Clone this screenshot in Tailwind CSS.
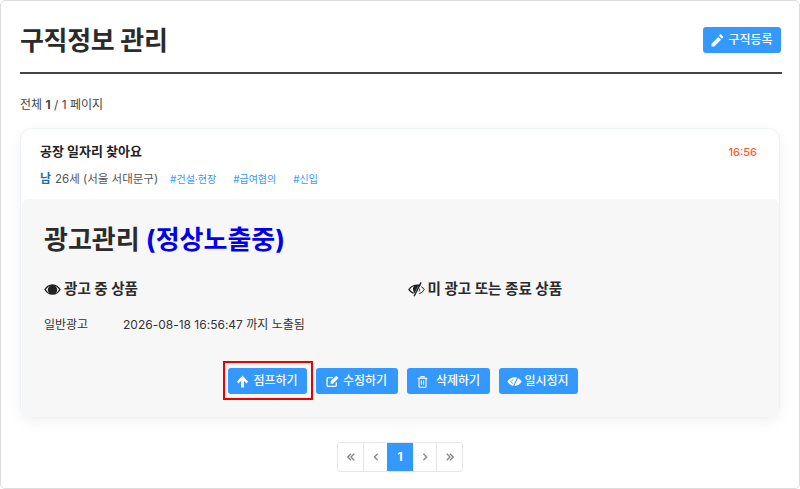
<!DOCTYPE html>
<html lang="ko">
<head>
    <meta charset="UTF-8">
    <title>구직정보 관리</title>
    <script src="https://cdn.jsdelivr.net/npm/@tailwindcss/browser@4"></script>
</head>
<body class="bg-white font-['Inter','Noto_Sans_CJK_KR',sans-serif] text-[#333]">
    <div class="h-[489px] w-[800px] overflow-hidden rounded-[5px] border border-[#ddd] pl-[19px] pr-[17px]">
        <!-- header -->
        <div class="flex h-[73px] items-center justify-between border-b-2 border-[#444] pt-[7px]">
            <h1 class="text-[26px] font-bold tracking-[-0.3px] text-[#2b2b2b]">구직정보 관리</h1>
            <button class="mr-px flex h-[26px] w-[78px] items-center justify-center gap-1 rounded-[3px] bg-[#3399ff] text-xs font-medium text-white">
                <svg class="h-[13px] w-[13px]" viewBox="0 0 24 24" fill="#fff"><path d="M1 18v5h5L18.500 10.500l-5-5zM21.800 7.200c1-1 1-2 0-3l-2.900-2.900c-1-1-2-1-3 0l-1.300 1.300 5 5.900z"/></svg>
                구직등록
            </button>
        </div>

        <p class="mt-[23px] text-xs leading-4 text-[#444]">전체 <b>1</b> / 1 페이지</p>

        <!-- card -->
        <div class="mt-[15px] h-[290px] w-[760px] overflow-hidden rounded-xl border border-[#edf2fa] bg-white shadow-[0_4px_14px_rgba(0,0,0,0.06)]">
            <div class="flex h-[70px] justify-between pl-[19px] pr-[22px]">
                <div>
                    <h2 class="mt-3 text-[13px] leading-5 font-bold text-[#222]">공장 일자리 찾아요</h2>
                    <div class="mt-2 flex items-center text-xs leading-5">
                        <span class="font-bold text-[#1a6fa8]">남</span>
                        <span class="ml-1 text-[11.5px] text-[#555]">26세 (서울 서대문구)</span>
                        <span class="ml-3 text-[10px] text-[#3399ff]">#건설·현장</span>
                        <span class="ml-[17px] text-[10px] text-[#3399ff]">#급여협의</span>
                        <span class="ml-[17px] text-[10px] text-[#3399ff]">#신입</span>
                    </div>
                </div>
                <span class="mt-[13px] text-[11px] leading-5 font-medium text-[#ff5a1f]">16:56</span>
            </div>

            <div class="ml-px h-[220px] rounded-t-md bg-[#f7f7f8] px-[22px]">
                <h3 class="pt-[22px] text-[26px] leading-[38px] font-bold text-[#2b2b2b]">광고관리 <span class="text-[#0000ee]">(정상노출중)</span></h3>
                <div class="mt-5 grid grid-cols-2 text-[14.6px] leading-5 font-bold text-[#2b2b2b]">
                    <div class="flex items-center gap-[3px]">
                        <svg class="h-[17px] w-[17px]" viewBox="0 0 24 24" fill="#222"><path fill-rule="evenodd" d="M12 4.500C6.800 4.500 2.700 7.800.3 12c2.400 4.200 6.500 7.500 11.700 7.500S21.300 16.200 23.700 12C21.300 7.800 17.200 4.500 12 4.500zM2.600 12C4.200 9.600 6.200 7.800 8.400 6.900A6.800 6.800 0 0 0 5.300 12.500c0 1.800.8 3.500 2.300 4.600C5.600 16 3.900 14.200 2.600 12zm14 5.100a6.800 6.800 0 0 0 2.100-4.600c0-2.300-1.200-4.300-3.100-5.600 2.300.9 4.400 2.700 5.800 5.100-1.300 2.200-3 4-4.800 5.100z"/><circle cx="12" cy="12" r="5.300"/></svg>
                        광고 중 상품
                    </div>
                    <div class="flex items-center gap-[3px] pl-[7px]">
                        <svg class="h-[17px] w-[17px]" viewBox="0 0 24 24"><path fill="#222" fill-rule="evenodd" d="M12 5C7 5 2.800 8 .3 12c1.700 2.800 4.100 5 7 6.200l1-1.900C5.800 15.300 3.900 13.800 2.600 12 4.200 9.700 6.400 8 9 7.200 7.800 8.200 7 9.800 7 11.500c0 1 .3 2 .8 2.800l1.200 3.500 5-10.200c.9-.1 1.900-.1 2.800.1l1-2.100C16.800 5.200 14.400 5 12 5z"/><path fill="#222" d="M19.300 2.500 9.500 22l-1.800-1L17.500 1.500zM18.800 7.500c2 1.100 3.700 2.700 4.900 4.500-1.800 3.200-4.800 5.600-8.400 6.700l.8-1.700c2.600-.9 4.900-2.700 6.200-5-1-1.300-2.300-2.500-3.600-3.200z"/><path fill="#222" d="M16.900 10.500c.3 2-.4 4-1.900 5.300l.4-2.200c.3-.9.4-1.800.3-2.700z"/></svg>
                        미 광고 또는 종료 상품
                    </div>
                </div>
                <div class="mt-4 flex text-xs leading-5 text-[#333]">
                    <span class="w-[79px]">일반광고</span>
                    <span>2026-08-18 16:56:47 까지 노출됨</span>
                </div>
                <div class="mt-[33px] flex justify-center gap-[9px] pl-1">
                    <div class="relative">
                        <button class="flex h-[26px] w-[79px] items-center justify-center gap-1 rounded-[3px] bg-[#3399ff] text-xs font-medium text-white">
                            <svg class="h-[13px] w-[13px]" viewBox="0 0 24 24" fill="#fff"><path d="M12 1 1.500 12.500l3.300 3.300 4.700-5V23h5V10.800l4.700 5 3.300-3.300z"/></svg>
                            점프하기
                        </button>
                        <div class="absolute -left-[5px] -top-[7px] h-[39px] w-[90px] border-2 border-[#ee0000]"></div>
                    </div>
                    <button class="flex h-[26px] w-[82px] items-center justify-center gap-1 rounded-[3px] bg-[#3399ff] text-xs font-medium text-white">
                        <svg class="h-[13px] w-[13px]" viewBox="0 0 24 24" fill="none" stroke="#fff" stroke-width="2.400"><path d="M19 14v5a2 2 0 0 1-2 2H4a2 2 0 0 1-2-2V7a2 2 0 0 1 2-2h9"/><path d="M8.500 16v-4.500L19 1.500l4 4-10 10.500z" fill="#fff" stroke="none"/></svg>
                        수정하기
                    </button>
                    <button class="flex h-[26px] w-[83px] items-center justify-center gap-[7px] rounded-[3px] bg-[#3399ff] text-xs font-medium text-white">
                        <svg class="h-[13px] w-[13px]" viewBox="0 0 24 24" fill="none" stroke="#fff" stroke-width="2"><path d="M3 6h18M9 6V3h6v3M5.500 6v15a1.500 1.500 0 0 0 1.500 1.500h10a1.500 1.500 0 0 0 1.500-1.500V6M10 10v8M14 10v8"/></svg>
                        삭제하기
                    </button>
                    <button class="flex h-[26px] w-[79px] items-center justify-center gap-[2px] rounded-[3px] bg-[#3399ff] text-xs font-medium text-white">
                        <svg class="h-[15px] w-[15px]" viewBox="0 0 24 24" fill="#fff"><path d="M12 5C7 5 3 8 .5 12 3 16 7 19 12 19s9-3 11.500-7C21 8 17 5 12 5z"/><path d="M18.500 3 9.500 21.500" stroke="#3399ff" stroke-width="1.800"/><path d="M10 8.500 6.500 12 9 15.500" fill="none" stroke="#3399ff" stroke-width="1.500"/></svg>
                        일시정지
                    </button>
                </div>
            </div>
        </div>

        <!-- pagination -->
        <div class="mt-[24px] flex w-[760px] justify-center">
            <div class="flex h-[30px] overflow-hidden rounded-[3px] border border-[#e6e6ea]">
                <a class="flex w-[26px] items-center justify-center border-r border-[#e6e6ea]">
                    <svg class="h-2 w-2" viewBox="0 0 10 10" fill="none" stroke="#888" stroke-width="1.700"><path d="M5 1 1 5l4 4M9 1 5 5l4 4"/></svg>
                </a>
                <a class="flex w-[23px] items-center justify-center">
                    <svg class="h-2 w-2" viewBox="0 0 10 10" fill="none" stroke="#888" stroke-width="1.700"><path d="M7 1 3 5l4 4"/></svg>
                </a>
                <a class="flex w-[26px] items-center justify-center bg-[#3399ff] text-xs font-bold text-white">1</a>
                <a class="flex w-[24px] items-center justify-center border-r border-[#e6e6ea]">
                    <svg class="h-2 w-2" viewBox="0 0 10 10" fill="none" stroke="#888" stroke-width="1.700"><path d="m3 1 4 4-4 4"/></svg>
                </a>
                <a class="flex w-[25px] items-center justify-center">
                    <svg class="h-2 w-2" viewBox="0 0 10 10" fill="none" stroke="#888" stroke-width="1.700"><path d="m1 1 4 4-4 4M5 1l4 4-4 4"/></svg>
                </a>
            </div>
        </div>
    </div>
</body>
</html>
